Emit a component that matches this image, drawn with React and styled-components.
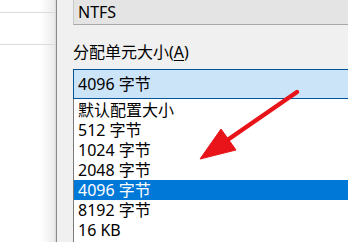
import React from 'react';
import styled, { createGlobalStyle } from 'styled-components';

const GlobalStyle = createGlobalStyle`
  html, body {
    margin: 0;
    padding: 0;
    width: 348px;
    height: 242px;
    overflow: hidden;
    background: #f0f0f0;
  }
  body {
    font-family: "Noto Sans", "Noto Sans CJK SC", sans-serif;
    font-size: 16px;
    line-height: 20px;
    color: #000;
  }
`;

const Screen = styled.div`
  position: relative;
  display: flex;
  width: 348px;
  height: 242px;
  overflow: hidden;
`;

const SidePane = styled.div`
  width: 56px;
  flex-shrink: 0;
  background: linear-gradient(to right, #ffffff 0, #ffffff 40px, #ececec 54px, #d8d8d8 56px);
  border-right: 1px solid #8a8a8a;
  display: flex;
  flex-direction: column;
`;

const SideRow = styled.div`
  height: ${(p) => p.h}px;
  flex-shrink: 0;
  border-bottom: 1px solid #dcdcdc;
`;

const Dialog = styled.div`
  flex: 1;
  background: #f0f0f0;
  padding-left: 16px;
  display: flex;
  flex-direction: column;
`;

const ReadonlyBox = styled.div`
  height: 24px;
  background: #e4e4e4;
  border-left: 1px solid #c8c8c8;
  border-bottom: 1px solid #a8a8a8;
  padding-left: 4px;
  display: flex;
  align-items: center;
  line-height: 1;
`;

const Label = styled.div`
  height: 20px;
  margin-top: 17px;
  margin-bottom: 7px;
  display: flex;
  align-items: center;
  white-space: nowrap;

  u {
    text-decoration: underline;
    text-underline-offset: 2px;
  }
`;

const Combo = styled.div`
  height: 28px;
  background: #cce4f7;
  border: 1px solid #005499;
  border-right: none;
  padding-left: 4px;
  display: flex;
  align-items: center;
  white-space: nowrap;
`;

const List = styled.div`
  background: #ffffff;
  border-left: 1px solid #7a7a7a;
  padding-top: 1px;
  display: flex;
  flex-direction: column;
  flex: 1;
`;

const Item = styled.div`
  height: 20px;
  line-height: 18px;
  flex-shrink: 0;
  padding-left: 4px;
  display: flex;
  align-items: center;
  white-space: nowrap;
  background: ${(p) => (p.selected ? '#0078d7' : 'transparent')};
  color: ${(p) => (p.selected ? '#ffffff' : '#000000')};
`;

const ArrowLayer = styled.svg`
  position: absolute;
  left: 0;
  top: 0;
  pointer-events: none;
`;

const sizes = ['默认配置大小', '512 字节', '1024 字节', '2048 字节', '4096 字节', '8192 字节', '16 KB'];

export default function App() {
  return (
    <>
      <GlobalStyle />
      <Screen>
        <SidePane>
          <SideRow h={12} />
          <SideRow h={31} />
        </SidePane>
        <Dialog>
          <ReadonlyBox>NTFS</ReadonlyBox>
          <Label>
            分配单元大小(<u>A</u>)
          </Label>
          <Combo>4096 字节</Combo>
          <List>
            {sizes.map((s) => (
              <Item key={s} selected={s === '4096 字节'}>
                {s}
              </Item>
            ))}
          </List>
        </Dialog>
        <ArrowLayer width="348" height="242" viewBox="0 0 348 242">
          <line x1="297" y1="92" x2="226" y2="141" stroke="#e8141a" strokeWidth="4.5" strokeLinecap="round" />
          <polygon points="200,159 221,129 236,150" fill="#e8141a" stroke="#e8141a" strokeWidth="1" strokeLinejoin="round" />
        </ArrowLayer>
      </Screen>
    </>
  );
}
